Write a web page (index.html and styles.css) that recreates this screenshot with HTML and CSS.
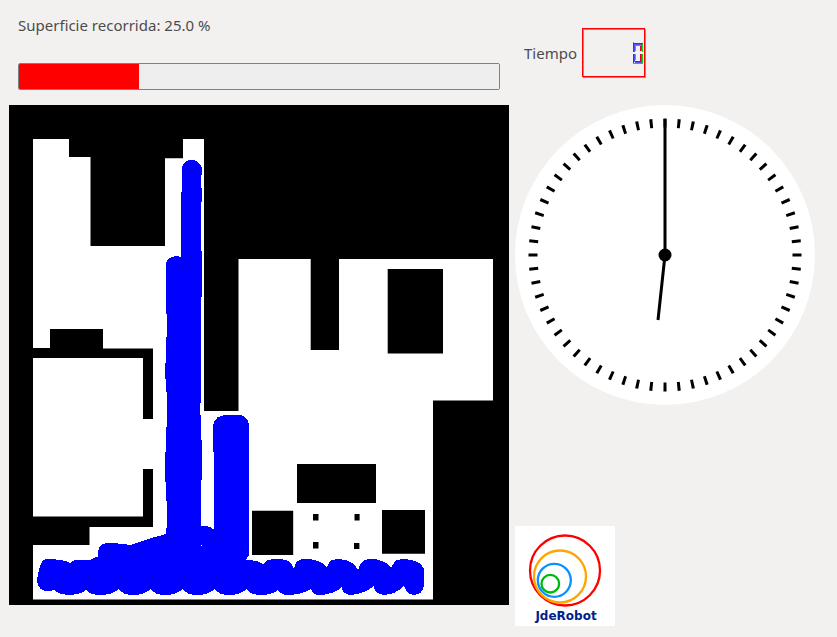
FILE: index.html
```
<!DOCTYPE html>
<html lang="es">
<head>
<meta charset="utf-8">
<meta name="viewport" content="width=device-width, initial-scale=1">
<title>JdeRobot</title>
<link rel="stylesheet" href="styles.css">
</head>
<body>
<main class="panel">
  <section class="coverage">
    <div class="coverage-head">
      <label for="covered">Superficie recorrida: 25.0 %</label>
      <progress id="covered" class="bar" value="25" max="100"></progress>
    </div>
    <svg class="map" viewBox="9 105 500 500" role="img" aria-label="Mapa">
      <rect x="9" y="105" width="500" height="500"/>
      <path fill="#fff" d="M33 139H69V157H90.500V246H165V158.300H183V139H204V411H238.500V259H310.700V350H339V259H493V400.500H433V599.500H33V545H89.500V527H153V469H143V516.500H33V358H143V419H153V348.600H103V329H50V348H33Z"/>
      <path d="M387.700 269H443V353.500H387.700ZM297 464H376V503H297ZM252 510.700H293.200V555H252ZM382 510H425V553.700H382ZM313 514H318.500V520.500H313ZM354.500 514H359.600V520.500H354.500ZM313 542H318.500V548.500H313ZM354 543H359.400V549H354Z"/>
      <path class="trail" d="M182 175V167Q184 160 192 160Q199 160 202 168V175H201V188H202V202H201V251H202V297H201V403H200V415H201V440H202V480H201V526Q208 525 213 529H213.500V452H213V425Q215 415 227 415H241Q248 417 249 425V555L246 560Q258 560 263 564L268 560Q284 557 291 563L294 569L296 563Q299 558 310 559Q322 561 327 567L330 561Q335 558 345 560Q354 562 358 570L361 563Q365 558 375 559Q388 562 391 568L395 561Q400 558 411 560Q421 562 424 569V586C422 598 407 597 405 588L403 586Q397 594 384 595Q374 594 374 586Q364 594 350 595Q342 594 342 587Q333 595 318 595Q312 594 311 589Q301 595 286 595Q280 594 278 590C269 597 251 597 247 589C238 597 219 597 215 589C206 597 187 597 183 589C174 597 155 597 151 589C142 597 123 597 119 589C110 597 91 597 86 590C77 597 60 596 54 590C47 593 37 591 37 580C39 569 40 560 46 559C55 559 67 560 70 563C74 558 83 560 88 560C93 560 93 557 98 557V552C99 542 108 543 113 543L131 545L148 539L166 534L167 523V502L166 501V482H165V452H166V427H167V392H166V379H165V363H166V337H167V314H166V263Q168 257 176 256L181 257V192H182Z"/>
      <rect x="201" y="545" width="1" height="1" fill="#fff"/>
    </svg>
  </section>

  <section class="side">
    <div class="timer">
      <label for="seconds">Tiempo</label>
      <output id="seconds" class="lcd" aria-label="0">
        <svg class="digit" viewBox="0 0 10 22" aria-hidden="true">
          <path stroke="#5050ff" d="M1 2.500H9M1.500 2V10M1.500 12V20M8.500 3V9M8.500 12V20M2 20.500H9"/>
          <path stroke="#e00020" d="M0 1.500H10M.500 1V10M.500 12V21M2 19.500H8M7.500 4V9M7.500 12V19"/>
          <path stroke="#00e020" d="M2 3.500H8M2.500 3V9M2.500 12V18M9.500 2V10M9.500 12V21M0 21.500H10M0 .500H1"/>
        </svg>
      </output>
    </div>
    <svg class="clock" viewBox="0 0 300 300" role="img" aria-label="Reloj">
      <circle cx="150" cy="150" r="150" fill="#fff"/>
      <circle class="ticks" cx="150" cy="150" r="132" pathLength="600"/>
      <path class="hand" d="M150 150V14M150 150L143 215"/>
      <circle cx="150" cy="150" r="6.500"/>
    </svg>
    <svg class="logo" viewBox="0 0 100 100" role="img" aria-label="JdeRobot">
      <rect width="100" height="100" fill="#fff"/>
      <g fill="none" stroke-width="2.300">
        <circle cx="50" cy="44.500" r="35" stroke="#f00"/>
        <circle cx="45" cy="50.500" r="26" stroke="#ffa500"/>
        <circle cx="39.300" cy="54.300" r="16.500" stroke="#0a90ff"/>
        <circle cx="35.300" cy="57.700" r="8.800" stroke="#00b80c"/>
      </g>
      <text class="logo-name" x="51" y="94" text-anchor="middle">JdeRobot</text>
    </svg>
  </section>
</main>
</body>
</html>
```
FILE: styles.css
```
* { box-sizing: border-box; }

body {
  margin: 0;
  background: #f2f1f0;
  color: #4c4c4c;
  font: 15px/20px "Noto Sans", "Open Sans", sans-serif;
}

.panel {
  display: grid;
  grid-template-columns: 5fr 3fr;
  gap: 6px;
  min-height: 100vh;
  padding: 0 22px 11px 9px;
}

svg { display: block; }

.coverage-head {
  display: flex;
  flex-direction: column;
  gap: 28px;
  height: 105px;
  padding: 15px 9px 0;
}

.bar {
  appearance: none;
  width: 100%;
  height: 27px;
  border: 1px solid #808080;
  border-radius: 2px;
  overflow: hidden;
  background: #eee;
}

.bar::-webkit-progress-bar { background: #eee; }
.bar::-webkit-progress-value { background: #f00; }
.bar::-moz-progress-bar { background: #f00; }

.map, .clock { width: 100%; }

.trail {
  fill: #00f;
  shape-rendering: crispEdges;
}

.side {
  display: flex;
  flex-direction: column;
}

.timer {
  display: grid;
  grid-template-columns: 58px 63px;
  align-items: center;
  height: 105px;
  padding: 0 9px;
}

.lcd {
  display: flex;
  align-items: center;
  justify-content: flex-end;
  height: 49px;
  padding-right: 1px;
  border: 1px solid #f00;
  box-shadow: 1px 1px #0f0, inset 1px 1px #0f0;
}

.digit {
  width: 10px;
  height: 22px;
  fill: none;
  shape-rendering: crispEdges;
}

.ticks {
  fill: none;
  stroke: #000;
  stroke-width: 9;
  stroke-dasharray: 2.2 7.8;
  stroke-dashoffset: 1.1;
}

.hand {
  stroke: #000;
  stroke-width: 3;
}

.logo {
  width: 100px;
  margin-top: auto;
}

.logo-name {
  fill: #002090;
  font: bold 12px "DejaVu Sans", sans-serif;
}
```
